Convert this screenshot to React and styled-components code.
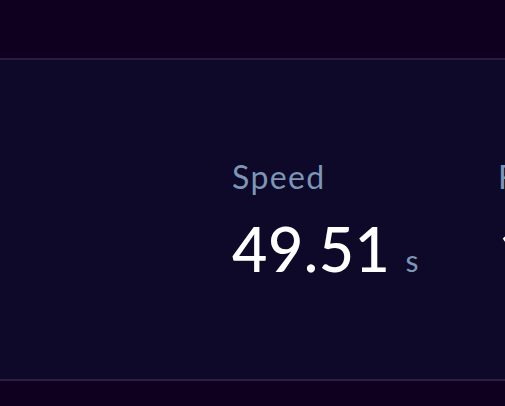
import React from "react";
import styled, { createGlobalStyle } from "styled-components";

const Global = createGlobalStyle`
  html, body { margin: 0; padding: 0; background: #10001f; }
  body { font-family: "Lato", "Noto Sans", sans-serif; overflow: hidden; }
  #root { width: 505px; height: 406px; }
`;

const Page = styled.div`
  width: 505px;
  height: 406px;
  padding-top: 58px;
  box-sizing: border-box;
  overflow: hidden;
`;

const Panel = styled.section`
  height: 323px;
  box-sizing: border-box;
  background: #0e0829;
  border-top: 2px solid #271c42;
  border-bottom: 2px solid #2a2043;
  display: flex;
  align-items: center;
  padding-left: 232px;
  overflow: hidden;
`;

const Stat = styled.div`
  display: flex;
  flex-direction: column;
  flex: 0 0 266px;
`;

const Label = styled.div`
  color: #7c96b6;
  font-size: 32px;
  line-height: 36px;
  letter-spacing: 1.4px;
`;

const ValueRow = styled.div`
  display: flex;
  align-items: baseline;
  gap: 15px;
  margin-top: 22px;
`;

const Value = styled.span`
  color: #ffffff;
  font-size: 61px;
  line-height: 64px;
  font-weight: 500;
  letter-spacing: 0.5px;
`;

const Unit = styled.span`
  color: #7c96b6;
  font-size: 30px;
`;

const stats = [
  { label: "Speed", value: "49.51", unit: "s" },
  { label: "Fuel", value: "12.0", unit: "L" },
];

export default function App() {
  return (
    <Page>
      <Global />
      <Panel>
        {stats.map((s) => (
          <Stat key={s.label}>
            <Label>{s.label}</Label>
            <ValueRow>
              <Value>{s.value}</Value>
              <Unit>{s.unit}</Unit>
            </ValueRow>
          </Stat>
        ))}
      </Panel>
    </Page>
  );
}
